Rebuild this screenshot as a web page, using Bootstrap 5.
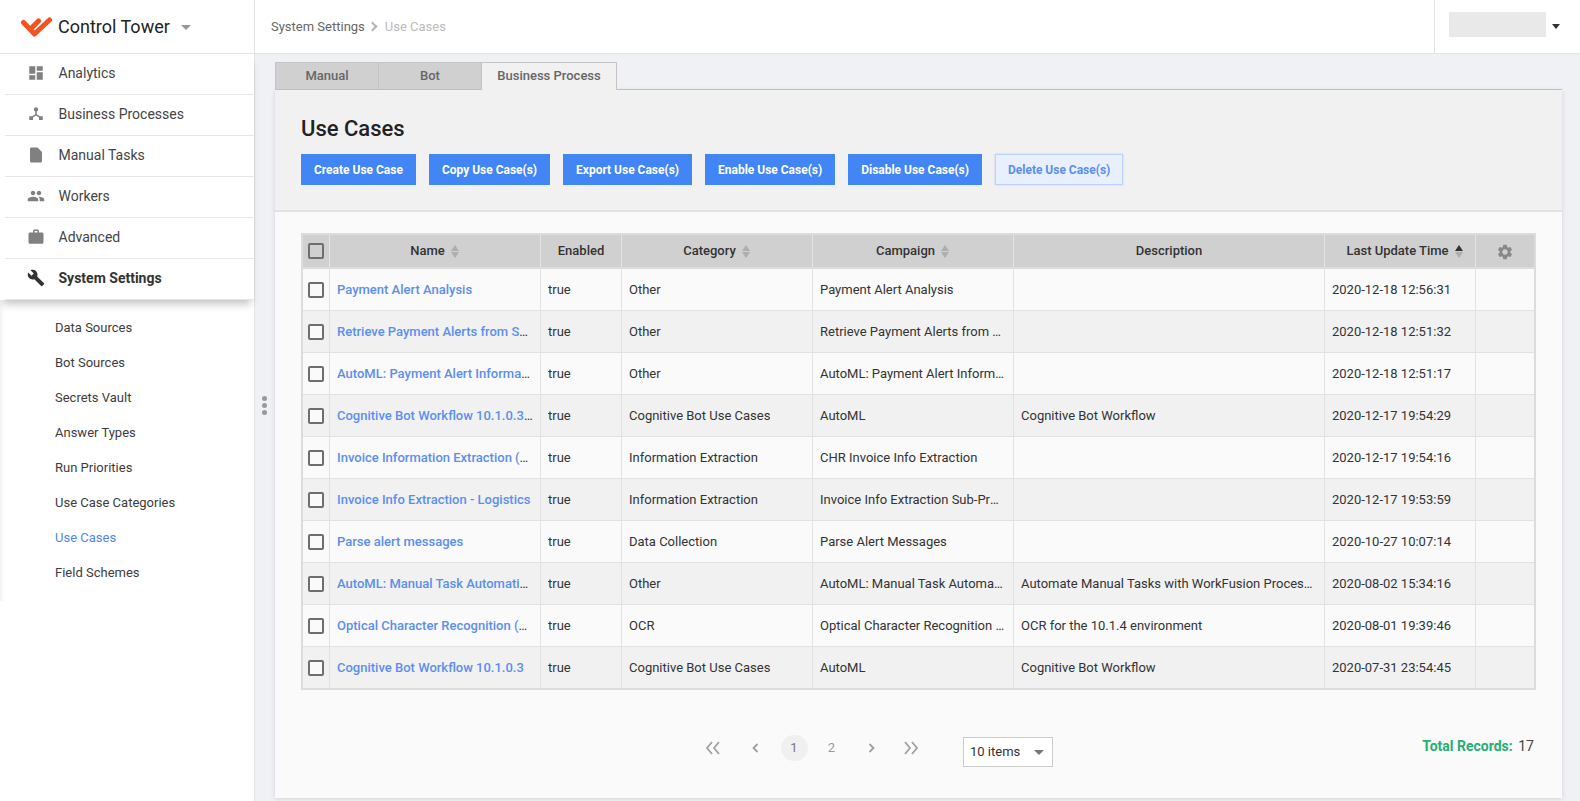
<!DOCTYPE html>
<html lang="en">
<head>
  <meta charset="UTF-8">
  <title>Control Tower - Use Cases</title>
  <link href="https://cdn.jsdelivr.net/npm/bootstrap@5.3.0/dist/css/bootstrap.min.css" rel="stylesheet">
  <style>
    html, body { height: 100%; }
    body {
      font-family: Roboto, "Liberation Sans", sans-serif;
      font-size: 13px;
      background: #f0f1f5;
      color: #333;
      overflow: hidden;
    }
    .app-shell { height: 801px; }

    /* sidebar */
    .side-col { width: 255px; flex: none; background: #fff; border-right: 1px solid #e3e4e8; }
    .brand-row { height: 54px; padding-left: 20px; border-bottom: 1px solid #e3e4e8; }
    .brand-name { font-size: 18px; color: #222; margin-left: 5px; }
    .brand-caret { width: 0; height: 0; border-left: 5px solid transparent; border-right: 5px solid transparent; border-top: 5px solid #999; margin-left: 11px; margin-top: 2px; }
    .main-menu { box-shadow: 0 7px 8px -3px rgba(0,0,0,.24); position: relative; }
    .main-link {
      height: 41px; margin-left: 5px; padding-left: 22px; padding-bottom: 2px;
      border-bottom: 1px solid #e6e6e6; color: #444; font-size: 14px; text-decoration: none;
    }
    .main-link svg { width: 18px; height: 18px; fill: #808080; margin-right: 13.5px; flex: none; }
    .main-link.current { font-weight: 700; color: #333; }
    .main-link.current svg { fill: #333; }
    .sub-menu { padding-top: 10px; padding-bottom: 11px; box-shadow: inset 6px 0 6px -6px rgba(0,0,0,.1); }
    .sub-link { display: block; height: 35px; line-height: 35px; padding-left: 55px; color: #3c3c3c; font-size: 13px; text-decoration: none; }
    .sub-link.current { color: #4d86f5; }

    /* top bar */
    .top-bar { height: 54px; background: #fff; border-bottom: 1px solid #e3e4e8; flex: none; }
    .crumbs { padding-left: 16px; color: #666; font-size: 13px; }
    .crumbs .sep { width: 7px; height: 7px; border-top: 2px solid #b4b4b4; border-right: 2px solid #b4b4b4; transform: rotate(45deg); margin: 0 9px 0 4px; }
    .crumbs .last { color: #bbb; }
    .user-box { width: 145px; height: 100%; border-left: 1px solid #e3e4e8; margin-left: auto; padding-left: 14px; margin-right: 1px; }
    .user-blur { width: 97px; height: 25px; background: #e9e9e9; margin-bottom: 4px; }
    .user-caret { width: 0; height: 0; border-left: 4.5px solid transparent; border-right: 4.5px solid transparent; border-top: 5px solid #333; margin-left: 6px; }

    /* resize grip */
    .grip-col { width: 20px; flex: none; padding-bottom: 42px; padding-right: 2px; }
    .grip-col i { display: block; width: 5px; height: 5px; border-radius: 50%; background: #999; margin-bottom: 2px; }

    /* panel */
    .work-col { min-width: 0; flex: 1; }
    .work-body { padding: 8px 18px 0 0; }
    .tab-strip { height: 28px; }
    .tab-item { height: 28px; background: #d0d0d0; border: 1px solid #c4c4c4; border-bottom: 1px solid #bfc1bd; color: #666; font-size: 13px; font-weight: 500; text-align: center; line-height: 26px; }
    .tab-item.first { width: 104px; }
    .tab-item.second { width: 103px; border-left: 0; }
    .tab-item.active { width: 135px; background: #f1f1f1; border-left: 0; border-bottom: 0; }
    .tab-rest { flex: 1; border-bottom: 1px solid #bfc1bd; }
    .panel-box { background: #fafafa; height: 708px; box-shadow: 0 1px 5px rgba(0,0,0,.12); }
    .panel-head { background: #f1f1f1; height: 122px; border-bottom: 2px solid #e2e2e2; padding: 26px 26px 0; }
    .panel-title { font-size: 22px; font-weight: 500; color: #222; margin: 0 0 12px; line-height: 26px; }
    .act-row { gap: 13px; }
    .act-btn {
      height: 31px; padding: 1px 13px 0; background: #4285f4; color: #fff; border: 0; border-radius: 0;
      font-size: 12px; font-weight: 700; line-height: 30px; letter-spacing: -.01px;
    }
    .act-btn.off { background: #e9f0fd; color: #5a8ff0; border: 1px solid #bcd2fa; box-shadow: 0 0 2px #bcd2fa; line-height: 28px; padding: 0 12px; }

    .grid-wrap { padding: 21px 20px 0 26px; }
    .uc-table { width: 1235px; table-layout: fixed; border-collapse: separate; border-spacing: 0; border: 2px solid #dcdcdc; }
    .uc-table th {
      height: 34px; background: #d0d0d0; font-size: 13px; font-weight: 500; color: #333; text-align: center;
      border-right: 1px solid #e4e4e4; border-bottom: 2px solid #dcdcdc; padding: 0;
    }
    .uc-table th.time-head { padding-left: 10px; }
    .uc-table td {
      height: 42px; padding: 0 7px; font-size: 13px; color: #333; white-space: nowrap; overflow: hidden; text-overflow: ellipsis;
      border-right: 1px solid #e2e2e2; border-bottom: 1px solid #e2e2e2; background: #fafafa;
    }
    .uc-table tr:nth-child(even) td { background: #f1f1f1; }
    .uc-table th:last-child, .uc-table td:last-child { border-right: 0; }
    .uc-table tr:last-child td { border-bottom: 0; height: 41px; }
    .uc-table a { color: #5a8ff0; font-weight: 500; text-decoration: none; }
    .tick { display: block; width: 16px; height: 16px; margin: 0 auto; border: 2px solid #6e6e6e; border-radius: 2px; background: #fafafa; }
    th .tick { background: #d0d0d0; }
    td.tick-cell { padding: 0; }
    .sorter { display: inline-block; width: 9px; margin-left: 6px; vertical-align: -3px; }
    .sorter b { display: block; width: 0; height: 0; border-left: 4.5px solid transparent; border-right: 4.5px solid transparent; }
    .sorter .up { border-bottom: 6px solid #aeaeae; margin-bottom: 1px; }
    .sorter .down { border-top: 6px solid #aeaeae; }
    .sorter .up.on { border-bottom-color: #333; }
    .gear-icon { width: 18px; height: 18px; fill: #888; }

    /* footer of table */
    .pager-row { height: 108px; }
    .pager-set { padding-left: 398.5px; padding-top: 45px; color: #999; font-size: 13px; }
    .pg { width: 27px; height: 26px; line-height: 26px; text-align: center; }
    .pg.now { background: #f0f0f0; border-radius: 13px; color: #777; margin-left: 11.5px; }
    .pg.two { margin-left: 10.5px; }
    .pg-arrow { display: flex; align-items: center; justify-content: center; }
    .pg-arrow.prev { margin-left: 15.5px; }
    .pg-arrow.next { margin-left: 12.5px; }
    .pg-arrow.last { margin-left: 13px; }
    .pg-arrow svg { fill: none; stroke: #a0a0a0; stroke-width: 1.8; }
    .pg-arrow .dbl { width: 18px; height: 14px; }
    .pg-arrow .sgl { width: 9px; height: 14px; }
    .size-pick { width: 90px; height: 30px; margin-left: 38.5px; margin-top: 2px; background: #fff; border: 1px solid #ccc; padding: 0 4px 0 6px; color: #333; font-size: 13px; }
    .size-pick u { width: 0; height: 0; border-left: 5px solid transparent; border-right: 5px solid transparent; border-top: 5px solid #777; margin-left: auto; margin-right: 4px; }
    .total-line { margin-left: auto; margin-right: 8px; padding-top: 46px; font-size: 14px; }
    .total-line strong { color: #27ae72; font-weight: 700; margin-right: 2px; }
    .total-line span { color: #444; }
  </style>
</head>
<body>
<div class="app-shell d-flex">
  <!-- sidebar -->
  <aside class="side-col">
    <div class="brand-row d-flex align-items-center">
      <svg width="33" height="24" viewBox="0 0 33 24"><path d="M3.500 7.500 14.500 19 29.500 5M10.500 14 18.500 6" fill="none" stroke="#f4511e" stroke-width="5" stroke-linecap="round" stroke-linejoin="round"/></svg>
      <span class="brand-name">Control Tower</span>
      <span class="brand-caret"></span>
    </div>
    <nav class="main-menu">
      <a class="main-link d-flex align-items-center" href="#"><svg viewBox="0 0 24 24"><path d="M3 13h8V3H3v10zm0 8h8v-6H3v6zm10 0h8V11h-8v10zm0-18v6h8V3h-8z"/></svg>Analytics</a>
      <a class="main-link d-flex align-items-center" href="#"><svg viewBox="0 0 24 24"><path d="M12 3a3 3 0 0 1 1 5.800v3.600l4.200 2.600H21v5h-5v-3.400L12 14l-4 2.600V20H3v-5h3.800l4.200-2.600V8.800A3 3 0 0 1 12 3z"/></svg>Business Processes</a>
      <a class="main-link d-flex align-items-center" href="#"><svg viewBox="0 0 24 24"><path d="M6 2c-1.100 0-2 .9-2 2v16c0 1.100.9 2 2 2h12c1.100 0 2-.9 2-2V8l-6-6H6z"/></svg>Manual Tasks</a>
      <a class="main-link d-flex align-items-center" href="#"><svg viewBox="0 0 24 24"><path d="M16 11c1.660 0 2.990-1.340 2.990-3S17.660 5 16 5c-1.660 0-3 1.340-3 3s1.340 3 3 3zm-8 0c1.660 0 2.990-1.340 2.990-3S9.660 5 8 5C6.340 5 5 6.340 5 8s1.340 3 3 3zm0 2c-2.330 0-7 1.170-7 3.500V19h14v-2.500c0-2.330-4.670-3.500-7-3.500zm8 0c-.29 0-.62.02-.97.05 1.160.84 1.970 1.970 1.970 3.450V19h6v-2.500c0-2.330-4.670-3.500-7-3.500z"/></svg>Workers</a>
      <a class="main-link d-flex align-items-center" href="#"><svg viewBox="0 0 24 24"><path d="M20 6h-4V4c0-1.110-.89-2-2-2h-4c-1.110 0-2 .89-2 2v2H4c-1.110 0-1.990.89-1.990 2L2 19c0 1.110.89 2 2 2h16c1.110 0 2-.89 2-2V8c0-1.110-.89-2-2-2zm-6 0h-4V4h4v2z"/></svg>Advanced</a>
      <a class="main-link current d-flex align-items-center" href="#"><svg viewBox="0 0 24 24"><path d="M22.700 19l-9.100-9.100c.9-2.300.4-5-1.500-6.900-2-2-5-2.400-7.400-1.300L9 6 6 9 1.600 4.700C.4 7.100.9 10.100 2.900 12.100c1.900 1.900 4.600 2.400 6.900 1.500l9.100 9.100c.4.4 1 .4 1.400 0l2.300-2.300c.5-.4.5-1.100.1-1.400z"/></svg>System Settings</a>
    </nav>
    <div class="sub-menu">
      <a class="sub-link" href="#">Data Sources</a>
      <a class="sub-link" href="#">Bot Sources</a>
      <a class="sub-link" href="#">Secrets Vault</a>
      <a class="sub-link" href="#">Answer Types</a>
      <a class="sub-link" href="#">Run Priorities</a>
      <a class="sub-link" href="#">Use Case Categories</a>
      <a class="sub-link current" href="#">Use Cases</a>
      <a class="sub-link" href="#">Field Schemes</a>
    </div>
  </aside>

  <div class="work-col d-flex flex-column">
    <header class="top-bar d-flex align-items-center">
      <div class="crumbs d-flex align-items-center"><span>System Settings</span><span class="sep"></span><span class="last">Use Cases</span></div>
      <div class="user-box d-flex align-items-center"><span class="user-blur"></span><span class="user-caret"></span></div>
    </header>

    <div class="d-flex flex-grow-1">
      <div class="grip-col d-flex flex-column align-items-center justify-content-center"><div><i></i><i></i><i></i></div></div>
      <div class="work-body flex-grow-1">
        <div class="tab-strip d-flex">
          <div class="tab-item first">Manual</div>
          <div class="tab-item second">Bot</div>
          <div class="tab-item active">Business Process</div>
          <div class="tab-rest"></div>
        </div>
        <section class="panel-box">
          <div class="panel-head">
            <h1 class="panel-title">Use Cases</h1>
            <div class="d-flex act-row">
              <button class="btn act-btn">Create Use Case</button>
              <button class="btn act-btn">Copy Use Case(s)</button>
              <button class="btn act-btn">Export Use Case(s)</button>
              <button class="btn act-btn">Enable Use Case(s)</button>
              <button class="btn act-btn">Disable Use Case(s)</button>
              <button class="btn act-btn off">Delete Use Case(s)</button>
            </div>
          </div>
          <div class="grid-wrap">
            <table class="uc-table">
              <colgroup><col style="width:27px"><col style="width:211px"><col style="width:81px"><col style="width:191px"><col style="width:201px"><col style="width:311px"><col style="width:151px"><col></colgroup>
              <thead>
                <tr>
                  <th><span class="tick"></span></th>
                  <th>Name<span class="sorter"><b class="up"></b><b class="down"></b></span></th>
                  <th>Enabled</th>
                  <th>Category<span class="sorter"><b class="up"></b><b class="down"></b></span></th>
                  <th>Campaign<span class="sorter"><b class="up"></b><b class="down"></b></span></th>
                  <th>Description</th>
                  <th class="time-head">Last Update Time<span class="sorter"><b class="up on"></b><b class="down"></b></span></th>
                  <th><svg class="gear-icon" viewBox="0 0 24 24"><path d="M19.140 12.940c.04-.3.06-.61.06-.94 0-.32-.02-.64-.07-.94l2.030-1.580c.18-.14.23-.41.12-.61l-1.920-3.320c-.12-.22-.37-.29-.59-.22l-2.390.96c-.5-.38-1.030-.7-1.620-.94l-.36-2.540c-.04-.24-.24-.41-.48-.41h-3.840c-.24 0-.43.17-.47.41l-.36 2.540c-.59.24-1.130.57-1.620.94l-2.390-.96c-.22-.08-.47 0-.59.22L2.740 8.870c-.12.21-.08.47.12.61l2.030 1.580c-.05.3-.09.63-.09.94s.02.64.07.94l-2.030 1.580c-.18.14-.23.41-.12.61l1.920 3.320c.12.22.37.29.59.22l2.390-.96c.5.38 1.030.7 1.620.94l.36 2.540c.05.24.24.41.48.41h3.840c.24 0 .44-.17.47-.41l.36-2.540c.59-.24 1.130-.56 1.620-.94l2.390.96c.22.08.47 0 .59-.22l1.920-3.320c.12-.22.07-.47-.12-.61l-2.010-1.580zM12 15.600c-1.980 0-3.600-1.620-3.600-3.600s1.620-3.600 3.600-3.600 3.600 1.620 3.600 3.600-1.620 3.600-3.600 3.600z"/></svg></th>
                </tr>
              </thead>
              <tbody>
                <tr><td class="tick-cell"><span class="tick"></span></td><td><a href="#">Payment Alert Analysis</a></td><td>true</td><td>Other</td><td>Payment Alert Analysis</td><td></td><td>2020-12-18 12:56:31</td><td></td></tr>
                <tr><td class="tick-cell"><span class="tick"></span></td><td><a href="#">Retrieve Payment Alerts from SharePoint</a></td><td>true</td><td>Other</td><td>Retrieve Payment Alerts from SharePoint</td><td></td><td>2020-12-18 12:51:32</td><td></td></tr>
                <tr><td class="tick-cell"><span class="tick"></span></td><td><a href="#">AutoML: Payment Alert Information</a></td><td>true</td><td>Other</td><td>AutoML: Payment Alert Information</td><td></td><td>2020-12-18 12:51:17</td><td></td></tr>
                <tr><td class="tick-cell"><span class="tick"></span></td><td><a href="#">Cognitive Bot Workflow 10.1.0.3 copy</a></td><td>true</td><td>Cognitive Bot Use Cases</td><td>AutoML</td><td>Cognitive Bot Workflow</td><td>2020-12-17 19:54:29</td><td></td></tr>
                <tr><td class="tick-cell"><span class="tick"></span></td><td><a href="#">Invoice Information Extraction (CHR)</a></td><td>true</td><td>Information Extraction</td><td>CHR Invoice Info Extraction</td><td></td><td>2020-12-17 19:54:16</td><td></td></tr>
                <tr><td class="tick-cell"><span class="tick"></span></td><td><a href="#">Invoice Info Extraction - Logistics</a></td><td>true</td><td>Information Extraction</td><td>Invoice Info Extraction Sub-Process</td><td></td><td>2020-12-17 19:53:59</td><td></td></tr>
                <tr><td class="tick-cell"><span class="tick"></span></td><td><a href="#">Parse alert messages</a></td><td>true</td><td>Data Collection</td><td>Parse Alert Messages</td><td></td><td>2020-10-27 10:07:14</td><td></td></tr>
                <tr><td class="tick-cell"><span class="tick"></span></td><td><a href="#">AutoML: Manual Task Automation</a></td><td>true</td><td>Other</td><td>AutoML: Manual Task Automation</td><td>Automate Manual Tasks with WorkFusion Process AutoML</td><td>2020-08-02 15:34:16</td><td></td></tr>
                <tr><td class="tick-cell"><span class="tick"></span></td><td><a href="#">Optical Character Recognition (OCR)</a></td><td>true</td><td>OCR</td><td>Optical Character Recognition (OCR)</td><td>OCR for the 10.1.4 environment</td><td>2020-08-01 19:39:46</td><td></td></tr>
                <tr><td class="tick-cell"><span class="tick"></span></td><td><a href="#">Cognitive Bot Workflow 10.1.0.3</a></td><td>true</td><td>Cognitive Bot Use Cases</td><td>AutoML</td><td>Cognitive Bot Workflow</td><td>2020-07-31 23:54:45</td><td></td></tr>
              </tbody>
            </table>
            <div class="pager-row d-flex">
              <div class="pager-set d-flex">
                <span class="pg pg-arrow"><svg class="dbl" viewBox="0 0 18 14"><path d="M8 1 3 7l5 6M15 1 10 7l5 6"/></svg></span>
                <span class="pg pg-arrow prev"><svg class="sgl" viewBox="0 0 9 14"><path d="M6.500 3 2.500 7l4 4"/></svg></span>
                <span class="pg now">1</span>
                <span class="pg two">2</span>
                <span class="pg pg-arrow next"><svg class="sgl" viewBox="0 0 9 14"><path d="M2.500 3l4 4-4 4"/></svg></span>
                <span class="pg pg-arrow last"><svg class="dbl" viewBox="0 0 18 14"><path d="M3 1l5 6-5 6M10 1l5 6-5 6"/></svg></span>
                <div class="size-pick d-flex align-items-center">10 items<u></u></div>
              </div>
              <div class="total-line"><strong>Total Records:</strong> <span>17</span></div>
            </div>
          </div>
        </section>
      </div>
    </div>
  </div>
</div>
<script src="https://cdn.jsdelivr.net/npm/bootstrap@5.3.0/dist/js/bootstrap.bundle.min.js"></script>
</body>
</html>
